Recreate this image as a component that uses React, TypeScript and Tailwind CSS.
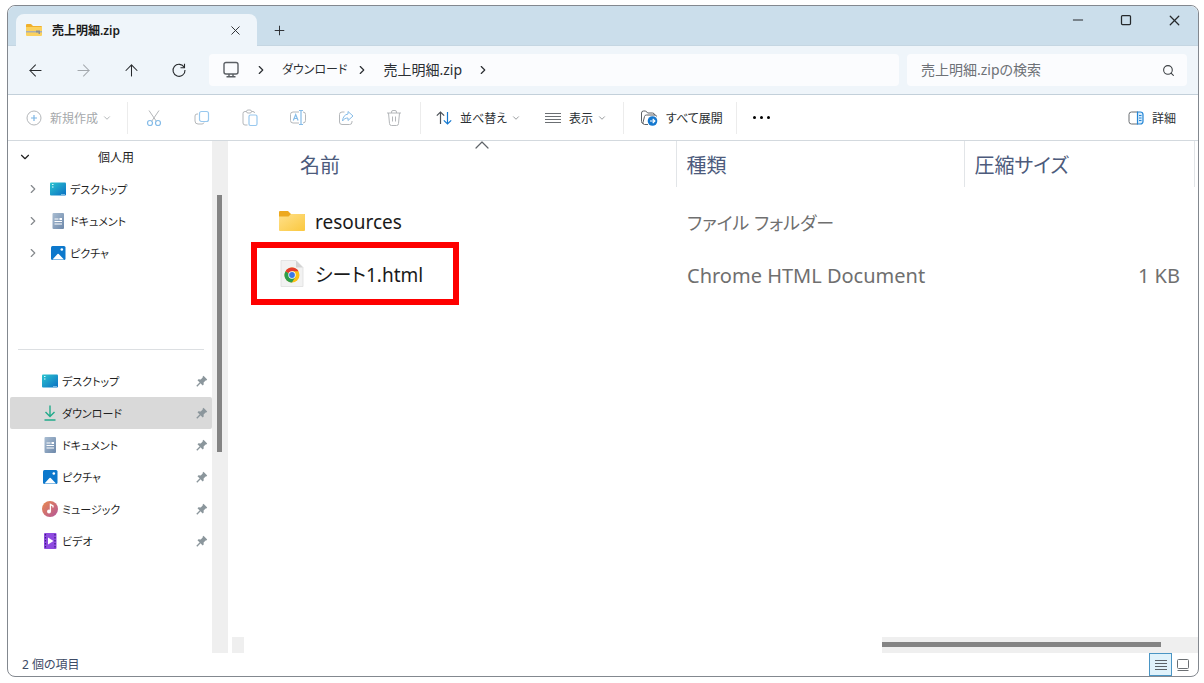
import type { ReactNode } from 'react';
import {
  ArrowLeft,
  ArrowRight,
  ArrowUp,
  ChevronDown,
  ChevronRight,
  ChevronUp,
  Minus,
  Plus,
  Search,
  Square,
  X,
} from 'lucide-react';

/* Icons */

function ZipFolderIcon() {
  return (
    <svg width="16" height="14" viewBox="0 0 16 14">
      <path d="M0 2a1 1 0 0 1 1-1h4l2 2h8a1 1 0 0 1 1 1v3H0z" fill="#f0b02c" />
      <path d="M0 4h16v8a1 1 0 0 1-1 1H1a1 1 0 0 1-1-1z" fill="#fbd15d" />
      <path d="M0 8h16v1.5H0z" fill="#a9aeb2" />
      <path d="M10 7.500h4v3.500h-1.500V9.500H10z" fill="#8b9298" />
    </svg>
  );
}

function DesktopIcon() {
  return (
    <svg width="16" height="16" viewBox="0 0 16 16">
      <defs>
        <linearGradient id="desk" x1="0" y1="0" x2="1" y2="1">
          <stop offset="0" stopColor="#2cc5cf" />
          <stop offset="1" stopColor="#0a6fc4" />
        </linearGradient>
      </defs>
      <rect y="1.5" width="16" height="13" rx="1" fill="url(#desk)" />
      <path d="M2 3.5h1.500M2 6h1.500M11.500 13.500h1M13.500 13.500h1" stroke="#d9fbff" strokeWidth="1.2" />
    </svg>
  );
}

function DocumentIcon() {
  return (
    <svg width="16" height="16" viewBox="0 0 16 16">
      <defs>
        <linearGradient id="doc" x1="0" y1="0" x2="1" y2="1">
          <stop offset="0" stopColor="#a9bdd2" />
          <stop offset="1" stopColor="#6d88aa" />
        </linearGradient>
      </defs>
      <rect x="2.5" width="11.5" height="16" rx="1" fill="url(#doc)" />
      <path d="M4.500 6h4M4.500 8.500h7.500M4.500 11h7.500" stroke="#fff" />
      <path d="M9.500 5h2.500v2H9.500z" fill="#fff" />
    </svg>
  );
}

function PictureIcon() {
  return (
    <svg width="16" height="16" viewBox="0 0 16 16">
      <rect x="1" y="1" width="14.5" height="14" rx="1.5" fill="#0c78cc" />
      <path d="M2.500 14.500l5-5.500a.8.8 0 0 1 1.200 0l5.300 5.500z" fill="#fff" />
      <circle cx="11.8" cy="4.5" r="1.3" fill="#fff" />
    </svg>
  );
}

function DownloadIcon() {
  return (
    <svg width="16" height="16" viewBox="0 0 16 16" fill="none" stroke="#22ab8b" strokeWidth="1.4">
      <path d="M8 .5v11M3.500 7L8 11.500 12.500 7M2.500 15h11" />
    </svg>
  );
}

function MusicIcon() {
  return (
    <svg width="16" height="16" viewBox="0 0 16 16">
      <defs>
        <linearGradient id="music" x1="0" y1="0" x2="1" y2="1">
          <stop offset="0" stopColor="#ea8a4d" />
          <stop offset="1" stopColor="#b3559a" />
        </linearGradient>
      </defs>
      <circle cx="8" cy="8" r="8" fill="url(#music)" />
      <circle cx="7" cy="10.5" r="2" fill="#fff" />
      <path d="M8.400 10.500V3.500l2.600 1.500v1.500" fill="none" stroke="#fff" strokeWidth="1.3" />
    </svg>
  );
}

function VideoIcon() {
  return (
    <svg width="16" height="16" viewBox="0 0 16 16">
      <rect x="2" width="12.5" height="16" rx="1" fill="#8f4be0" />
      <path d="M3.500 1v14M13 1v14" stroke="#3f1a86" strokeWidth="1.2" strokeDasharray="1.5 1.5" />
      <path d="M6 4.500L11.500 8 6 11.500z" fill="#fff" />
    </svg>
  );
}

function PinIcon() {
  return (
    <svg width="12" height="12" viewBox="0 0 12 12">
      <path d="M7.500.8l3.700 3.700-.9 1-.7-.1-2 2 .1 2-1 1L1.500 5.300l1-1 2.200.1 2-2L6.600 1.700z" fill="#8b969c" />
      <path d="M4.200 7.800L.8 11.200" stroke="#8b969c" strokeWidth="1.3" />
    </svg>
  );
}

function FolderIcon() {
  return (
    <svg width="26" height="24" viewBox="0 0 26 24">
      <defs>
        <linearGradient id="folder" x1="0" y1="0" x2="1" y2="1">
          <stop offset="0" stopColor="#ffe08a" />
          <stop offset="1" stopColor="#fac83f" />
        </linearGradient>
      </defs>
      <path d="M0 2a1 1 0 0 1 1-1h8l3 3h13a1 1 0 0 1 1 1v5H0z" fill="#eda91f" />
      <path d="M0 6.500h9.500L12 4h13a1 1 0 0 1 1 1v15a1 1 0 0 1-1 1H1a1 1 0 0 1-1-1z" fill="url(#folder)" />
    </svg>
  );
}

function ChromeFileIcon() {
  return (
    <svg width="26" height="30" viewBox="0 0 26 30">
      <path d="M2 .5h15l7 7v19H2z" fill="#f2f2f2" stroke="#dedede" strokeWidth=".8" />
      <path d="M17 .5v7h7z" fill="#d3d3d3" />
      <circle cx="13" cy="15" r="7.5" fill="#fbc116" />
      <path d="M13 15L6.500 11.250A7.500 7.500 0 0 0 13 22.500l3.250-5.600z" fill="#2d9d4c" />
      <path d="M13 15L6.500 11.250A7.500 7.500 0 0 1 19.500 11.250H13z" fill="#e33b2e" />
      <circle cx="13" cy="15" r="3.7" fill="#fff" />
      <circle cx="13" cy="15" r="2.9" fill="#3b78e7" />
    </svg>
  );
}

function RefreshIcon() {
  return (
    <svg width="16" height="16" viewBox="0 0 16 16" fill="none" stroke="currentColor" strokeWidth="1.1">
      <path d="M13.300 5.500A6 6 0 1 0 14 8" />
      <path d="M13.500 1.800v4h-4" />
    </svg>
  );
}

function MonitorIcon() {
  return (
    <svg width="18" height="18" viewBox="0 0 18 18" fill="none" stroke="#5b5f64" strokeWidth="1.4">
      <rect x="2" y="1.5" width="14" height="11.5" rx="2" />
      <path d="M7 13v2.500M11 13v2.500M4.500 15.800h9" />
    </svg>
  );
}

function NewIcon() {
  return (
    <svg width="16" height="16" viewBox="0 0 16 16" fill="none">
      <circle cx="8" cy="8" r="7" stroke="#b4b7ba" />
      <path d="M8 5v6M5 8h6" stroke="#7db6e4" strokeWidth="1.2" />
    </svg>
  );
}

function CutIcon() {
  return (
    <svg width="16" height="18" viewBox="0 0 16 18" fill="none">
      <path d="M3 1.500l7.500 11M13 1.500l-7.500 11" stroke="#b4b7ba" />
      <circle cx="4" cy="14" r="2.5" stroke="#86bce8" strokeWidth="1.2" />
      <circle cx="12" cy="14" r="2.5" stroke="#86bce8" strokeWidth="1.2" />
    </svg>
  );
}

function CopyIcon() {
  return (
    <svg width="16" height="16" viewBox="0 0 16 16" fill="none">
      <path d="M4 4H3a2 2 0 0 0-2 2v5a3 3 0 0 0 3 3h4a2 2 0 0 0 2-1.500" stroke="#b4b7ba" />
      <rect x="5.5" y="1.5" width="9" height="10" rx="2" stroke="#98c8ee" strokeWidth="1.2" />
    </svg>
  );
}

function PasteIcon() {
  return (
    <svg width="16" height="18" viewBox="0 0 16 18" fill="none">
      <path
        d="M4.500 2.500H3a2 2 0 0 0-2 2V14a2 2 0 0 0 2 2h2.500M9.500 2.500H11a1.500 1.500 0 0 1 1.500 1.500"
        stroke="#b4b7ba"
      />
      <rect x="4.5" y="1" width="5" height="3" rx="1.5" stroke="#b4b7ba" />
      <rect x="7" y="6" width="8" height="10.5" rx="1.5" stroke="#98c8ee" strokeWidth="1.2" />
    </svg>
  );
}

function RenameIcon() {
  return (
    <svg width="18" height="18" viewBox="0 0 18 18" fill="none">
      <path
        d="M10 3H4a2.500 2.500 0 0 0-2.500 2.500v6A2.500 2.500 0 0 0 4 14h6M14 3a2.500 2.500 0 0 1 2.500 2.500v6A2.500 2.500 0 0 1 14 14"
        stroke="#b4b7ba"
      />
      <path
        d="M12 1.500v14M10 1.500h4M10 15.500h4M4.300 11.500L6.700 5.500l2.400 6M5.200 9.500h3"
        stroke="#86bce8"
        strokeWidth="1.2"
      />
    </svg>
  );
}

function ShareIcon() {
  return (
    <svg width="16" height="16" viewBox="0 0 16 16" fill="none">
      <path
        d="M6.500 2H4a2.500 2.500 0 0 0-2.500 2.500V12A2.500 2.500 0 0 0 4 14.500h7.500A2.500 2.500 0 0 0 14 12v-1"
        stroke="#b4b7ba"
      />
      <path
        d="M10 1.500L15 6l-5 4.500V8C7.500 8 6 8.800 4.500 11c.3-4 2.300-6.500 5.500-7z"
        stroke="#86bce8"
        strokeLinejoin="round"
      />
    </svg>
  );
}

function TrashIcon() {
  return (
    <svg width="16" height="18" viewBox="0 0 16 18" fill="none" stroke="#b4b7ba">
      <path d="M1 4h14M5.500 4V3A1.500 1.500 0 0 1 7 1.500h2A1.500 1.500 0 0 1 10.500 3v1M2.500 4l1 10.500a2 2 0 0 0 2 2h5a2 2 0 0 0 2-2l1-10.500M6.500 7.500v5M9.500 7.500v5" />
    </svg>
  );
}

function SortIcon() {
  return (
    <svg width="16" height="16" viewBox="0 0 16 16" fill="none" strokeWidth="1.2">
      <path d="M4.500 14V2M.8 5.700L4.500 2l3.700 3.700" stroke="#4c5157" />
      <path d="M11.500 2v12M7.800 10.300l3.700 3.700 3.700-3.700" stroke="#1478cf" />
    </svg>
  );
}

function ListIcon() {
  return (
    <svg width="16" height="16" viewBox="0 0 16 16" stroke="#6b6f73">
      <path d="M0 3.500h16M0 6.500h16M0 9.500h16M0 12.500h16" />
    </svg>
  );
}

function ExtractIcon() {
  return (
    <svg width="18" height="18" viewBox="0 0 18 18" fill="none">
      <path d="M3.500 14.500A2 2 0 0 1 1.500 12.500V4a2 2 0 0 1 2-2h2.200l2 2h4.800a2 2 0 0 1 2 2" stroke="#5c6166" />
      <path
        d="M8 15.500H4.500a1.500 1.500 0 0 1-1.500-2L4.500 7.500a2 2 0 0 1 2-1.500H15a1.500 1.500 0 0 1 1.500 1.500"
        stroke="#5c6166"
      />
      <circle cx="12.5" cy="12" r="4.8" fill="#1478cf" />
      <path d="M10 12h4.500M12.700 9.800l2.200 2.200-2.200 2.200" stroke="#fff" strokeWidth="1.2" />
    </svg>
  );
}

function DetailsPaneIcon() {
  return (
    <svg width="16" height="14" viewBox="0 0 16 14" fill="none">
      <path d="M10 1H3.500A2.500 2.500 0 0 0 1 3.500v7A2.500 2.500 0 0 0 3.500 13H10" stroke="#6b6f73" />
      <path
        d="M9.500 1h3A2.500 2.500 0 0 1 15 3.500v7a2.500 2.500 0 0 1-2.500 2.500h-3z"
        fill="#d8ecfb"
        stroke="#2486d6"
        strokeWidth="1.2"
      />
      <path d="M11 4.500h2.500M11 7h2.500M11 9.500h2.500" stroke="#2486d6" />
    </svg>
  );
}

/* Data */

const treeItems = [
  { label: 'デスクトップ', icon: <DesktopIcon /> },
  { label: 'ドキュメント', icon: <DocumentIcon /> },
  { label: 'ピクチャ', icon: <PictureIcon /> },
];

const quickItems = [
  { label: 'デスクトップ', icon: <DesktopIcon />, active: false },
  { label: 'ダウンロード', icon: <DownloadIcon />, active: true },
  { label: 'ドキュメント', icon: <DocumentIcon />, active: false },
  { label: 'ピクチャ', icon: <PictureIcon />, active: false },
  { label: 'ミュージック', icon: <MusicIcon />, active: false },
  { label: 'ビデオ', icon: <VideoIcon />, active: false },
];

const editActions = [
  { label: '切り取り', icon: <CutIcon /> },
  { label: 'コピー', icon: <CopyIcon /> },
  { label: '貼り付け', icon: <PasteIcon /> },
  { label: '名前の変更', icon: <RenameIcon /> },
  { label: '共有', icon: <ShareIcon /> },
  { label: '削除', icon: <TrashIcon /> },
];

const files = [
  { name: 'resources', type: 'ファイル フォルダー', typeClass: 'text-lg', size: '', icon: <FolderIcon />, marked: false },
  { name: 'シート1.html', type: 'Chrome HTML Document', typeClass: 'text-xl', size: '1 KB', icon: <ChromeFileIcon />, marked: true },
];

/* Parts */

function TitleBar() {
  return (
    <div className="flex h-10 items-end rounded-t-lg border-b border-[#c5d6e2] bg-[#cbdeeb] pl-2">
      <div className="-mb-px flex h-8 w-[241px] items-center rounded-t-lg bg-[#eff5fa] pl-2.5 pr-3.5">
        <ZipFolderIcon />
        <span className="ml-2.5 flex-1 pt-0.5 text-xs font-semibold text-[#1b1b1b]">売上明細.zip</span>
        <button aria-label="タブを閉じる">
          <X size={15} strokeWidth={1.5} />
        </button>
      </div>
      <button aria-label="新しいタブ" className="mb-[7px] ml-[15px]">
        <Plus size={15} strokeWidth={1.5} />
      </button>
      <div className="ml-auto flex self-start">
        <button aria-label="最小化" className="flex h-7 w-12 items-center justify-center">
          <Minus size={16} strokeWidth={1.5} />
        </button>
        <button aria-label="最大化" className="flex h-7 w-12 items-center justify-center">
          <Square size={12} strokeWidth={2.5} />
        </button>
        <button aria-label="閉じる" className="flex h-7 w-12 items-center justify-center">
          <X size={17} strokeWidth={1.8} />
        </button>
      </div>
    </div>
  );
}

function NavButton({ label, children }: { label: string; children: ReactNode }) {
  return (
    <button aria-label={label} className="flex h-8 w-12 items-center justify-center">
      {children}
    </button>
  );
}

function NavBar() {
  return (
    <div className="flex items-center border-b border-[#c3d0da] bg-[#eff5fa] py-2 pl-[3px] pr-[11px]">
      <NavButton label="戻る">
        <ArrowLeft size={19} strokeWidth={1.3} />
      </NavButton>
      <NavButton label="進む">
        <ArrowRight size={19} strokeWidth={1.3} className="text-[#a3a8ad]" />
      </NavButton>
      <NavButton label="上へ">
        <ArrowUp size={19} strokeWidth={1.3} />
      </NavButton>
      <NavButton label="最新の情報に更新">
        <RefreshIcon />
      </NavButton>
      <nav className="ml-1.5 flex h-8 flex-1 items-center rounded bg-[#fbfcfe] pl-[13px] text-sm text-[#2b2f33]">
        <MonitorIcon />
        <ChevronRight size={14} className="ml-3.5" />
        <a href="#downloads" className="ml-3.5 text-xs">ダウンロード</a>
        <ChevronRight size={14} className="ml-2" />
        <a href="#zip" className="ml-3.5">売上明細.zip</a>
        <ChevronRight size={14} className="ml-3.5" />
      </nav>
      <label className="ml-2 flex h-8 w-[280px] items-center rounded bg-[#fbfcfe] pl-3.5 pr-3">
        <input
          type="text"
          aria-label="検索"
          placeholder="売上明細.zipの検索"
          className="min-w-0 flex-1 bg-transparent text-sm outline-none placeholder:text-[#6d7176]"
        />
        <Search size={13} strokeWidth={2} className="text-[#3c4044]" />
      </label>
    </div>
  );
}

function Toolbar() {
  return (
    <div className="flex h-[46px] items-center border-b border-[#d3d9de] bg-white text-xs text-[#2b2f33]">
      <button className="flex h-8 w-[120px] items-center border-r border-[#ececec] pl-[18px] text-[#a5a8ab]">
        <NewIcon />
        <span className="ml-2 pt-0.5">新規作成</span>
        <ChevronDown size={10} className="ml-1" />
      </button>
      <div className="flex h-8 w-[293px] items-center border-r border-[#ececec] pl-0.5">
        {editActions.map((action) => (
          <button key={action.label} aria-label={action.label} className="flex h-8 w-12 items-center justify-center">
            {action.icon}
          </button>
        ))}
      </div>
      <div className="flex h-8 w-[203px] items-center border-r border-[#ececec] pl-[15px]">
        <button className="flex items-center">
          <SortIcon />
          <span className="ml-2 pt-0.5">並べ替え</span>
          <ChevronDown size={10} className="ml-1 text-[#85898d]" />
        </button>
        <button className="ml-6 flex items-center">
          <ListIcon />
          <span className="ml-2 pt-0.5">表示</span>
          <ChevronDown size={10} className="ml-1 text-[#85898d]" />
        </button>
      </div>
      <button className="flex h-8 w-[113px] items-center border-r border-[#ececec] pl-4">
        <ExtractIcon />
        <span className="ml-2 pt-0.5">すべて展開</span>
      </button>
      <button aria-label="その他" className="flex h-8 w-12 items-center justify-center gap-1">
        <span className="size-[3px] rounded-full bg-black" />
        <span className="size-[3px] rounded-full bg-black" />
        <span className="size-[3px] rounded-full bg-black" />
      </button>
      <button className="ml-auto mr-[22px] flex items-center">
        <DetailsPaneIcon />
        <span className="ml-2 pt-0.5">詳細</span>
      </button>
    </div>
  );
}

function Sidebar() {
  return (
    <aside className="flex w-[220px] shrink-0 bg-white text-[11px] text-[#1f1f1f]">
      <div className="flex-1 pl-0.5">
        <button className="flex h-8 w-full items-center pl-2 text-xs">
          <ChevronDown size={14} />
          <span className="ml-[66px] pt-0.5">個人用</span>
        </button>
        {treeItems.map((item) => (
          <button key={item.label} className="flex h-8 w-full items-center pl-4">
            <ChevronRight size={14} className="mr-2.5 text-[#85898d]" />
            {item.icon}
            <span className="ml-1 pt-0.5">{item.label}</span>
          </button>
        ))}
        <hr className="mx-2 mb-[15px] mt-20 border-[#dcdfe2]" />
        {quickItems.map((item) => (
          <button
            key={item.label}
            className={`flex h-8 w-full items-center rounded-xs pl-8 pr-1 ${item.active ? 'bg-[#d9d9d9]' : ''}`}
          >
            {item.icon}
            <span className="ml-1 mr-auto pt-0.5">{item.label}</span>
            <PinIcon />
          </button>
        ))}
      </div>
      <div className="w-4 bg-[#efefef] pl-[5px] pt-[54px]">
        <div className="h-[257px] w-[5px] bg-[#848484]" />
      </div>
    </aside>
  );
}

function FileTable() {
  return (
    <table className="w-full table-fixed border-collapse text-xl">
      <colgroup>
        <col />
        <col className="w-72" />
        <col className="w-[230px]" />
        <col className="w-1" />
      </colgroup>
      <thead>
        <tr className="h-[46px] text-left text-[#4d5b7c]">
          <th className="relative pl-[72px] pt-1 font-normal">
            名前
            <ChevronUp size={24} strokeWidth={1.2} className="absolute -top-2 left-[242px] text-[#5f6368]" />
          </th>
          <th className="border-l border-[#e2e5e8] pl-2.5 pt-1 font-normal">種類</th>
          <th className="border-x border-[#e2e5e8] pl-2.5 pt-1 font-normal">圧縮サイズ</th>
          <th />
        </tr>
      </thead>
      <tbody className="before:block before:h-2">
        {files.map((file) => (
          <tr key={file.name} className="h-[53px] text-[#6f6f6f]">
            <td className="relative pl-[51px] text-[19px] text-[#1a1a1a]">
              <a href={`#${file.name}`} className="flex items-center gap-2.5">
                {file.icon}
                <span className="pt-0.5">{file.name}</span>
              </a>
              {file.marked && (
                <span className="absolute -top-1.5 left-[23px] h-[63px] w-52 border-6 border-[#fe0000]" />
              )}
            </td>
            <td className={`pl-[11px] pt-0.5 ${file.typeClass}`}>{file.type}</td>
            <td className="pr-3.5 pt-0.5 text-right">{file.size}</td>
            <td />
          </tr>
        ))}
      </tbody>
    </table>
  );
}

function StatusBar() {
  return (
    <footer className="flex h-[23px] items-center pl-3.5 text-xs text-[#3d4b66]">
      <span>2 個の項目</span>
      <button
        aria-label="詳細表示"
        className="ml-auto flex h-[23px] w-[23px] items-center justify-center border border-[#4a95c4] bg-[#e0f2fb]"
      >
        <svg width="12" height="14" viewBox="0 0 12 14" stroke="#5b6268">
          <path d="M0 2.500h12M0 5.500h12M0 8.500h12M0 11.500h12" />
        </svg>
      </button>
      <button aria-label="大アイコン" className="ml-1 mr-2 flex h-[23px] w-[14px] items-center justify-center">
        <svg width="14" height="14" viewBox="0 0 14 14" fill="none" stroke="#6b6f73">
          <rect x="1.5" y="1.5" width="11" height="9" rx="1" />
          <path d="M1.500 12.500h11" />
        </svg>
      </button>
    </footer>
  );
}

export default function App() {
  return (
    <div className="flex min-h-screen bg-white pb-1.5 pl-[7px] pr-[5px] pt-[5px] font-['Noto_Sans','Noto_Sans_CJK_JP',sans-serif] text-[#26292c] [font-feature-settings:'palt']">
      <div className="flex min-w-0 flex-1 flex-col rounded-lg border border-[#83888f] bg-white">
        <TitleBar />
        <NavBar />
        <Toolbar />
        <div className="flex flex-1">
          <Sidebar />
          <main className="flex min-w-0 flex-1 flex-col justify-between">
            <FileTable />
            <div className="flex h-4 justify-between pl-1">
              <div className="w-3 bg-[#efefef]" />
              <div className="w-[316px] bg-[#efefef] pt-[5px]">
                <div className="h-[5px] w-[279px] bg-[#848484]" />
              </div>
            </div>
          </main>
        </div>
        <StatusBar />
      </div>
    </div>
  );
}
